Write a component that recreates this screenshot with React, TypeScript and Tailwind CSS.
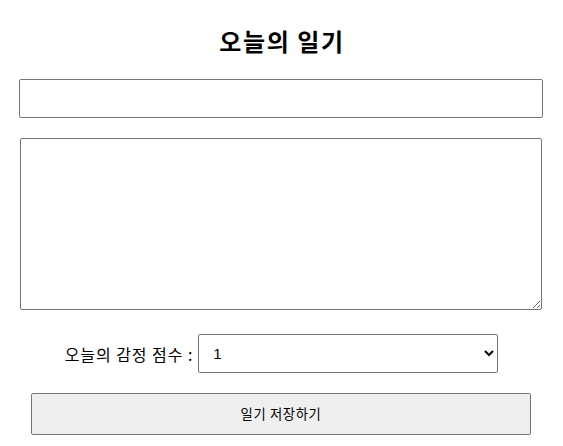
import React from "react";

export default function App() {
  return (
    <div
      className="w-[563px] h-[446px] bg-white text-black flex flex-col items-center pr-[1px]"
      style={{ fontFamily: '"Noto Sans CJK KR", "Noto Sans", sans-serif' }}
    >
      <h2 className="mt-[27px] h-[28px] leading-[28px] text-[24px] font-bold tracking-[1.6px] pl-[2px]">오늘의 일기</h2>
      <input
        className="mt-[24px] w-[524px] h-[39px] border border-[#767676] rounded-[2px] bg-white px-2 text-[16px] outline-none"
        defaultValue=""
      />
      <textarea
        className="mt-[20px] w-[522px] h-[172px] border border-[#767676] rounded-[2px] bg-white p-2 text-[16px] outline-none block"
        defaultValue=""
      />
      <div className="mt-[24px] flex items-center gap-[5px] pl-[1px]">
        <span className="text-[16px] leading-[20px] tracking-[0.95px]">오늘의 감정 점수 :</span>
        <select
          className="w-[300px] h-[39px] border border-[#767676] rounded-[2px] bg-white pl-[10px] pr-[6px] text-[15px] outline-none"
          style={{ fontFamily: '"Liberation Sans", Arial, sans-serif' }}
          defaultValue="1"
        >
          <option value="1">1</option>
          <option value="2">2</option>
          <option value="3">3</option>
          <option value="4">4</option>
          <option value="5">5</option>
        </select>
      </div>
      <button className="mt-[20px] w-[500px] h-[42px] border border-[#767676] rounded-[2px] bg-[#efefef] text-[13.33px] tracking-[0.6px]">
        일기 저장하기
      </button>
    </div>
  );
}
